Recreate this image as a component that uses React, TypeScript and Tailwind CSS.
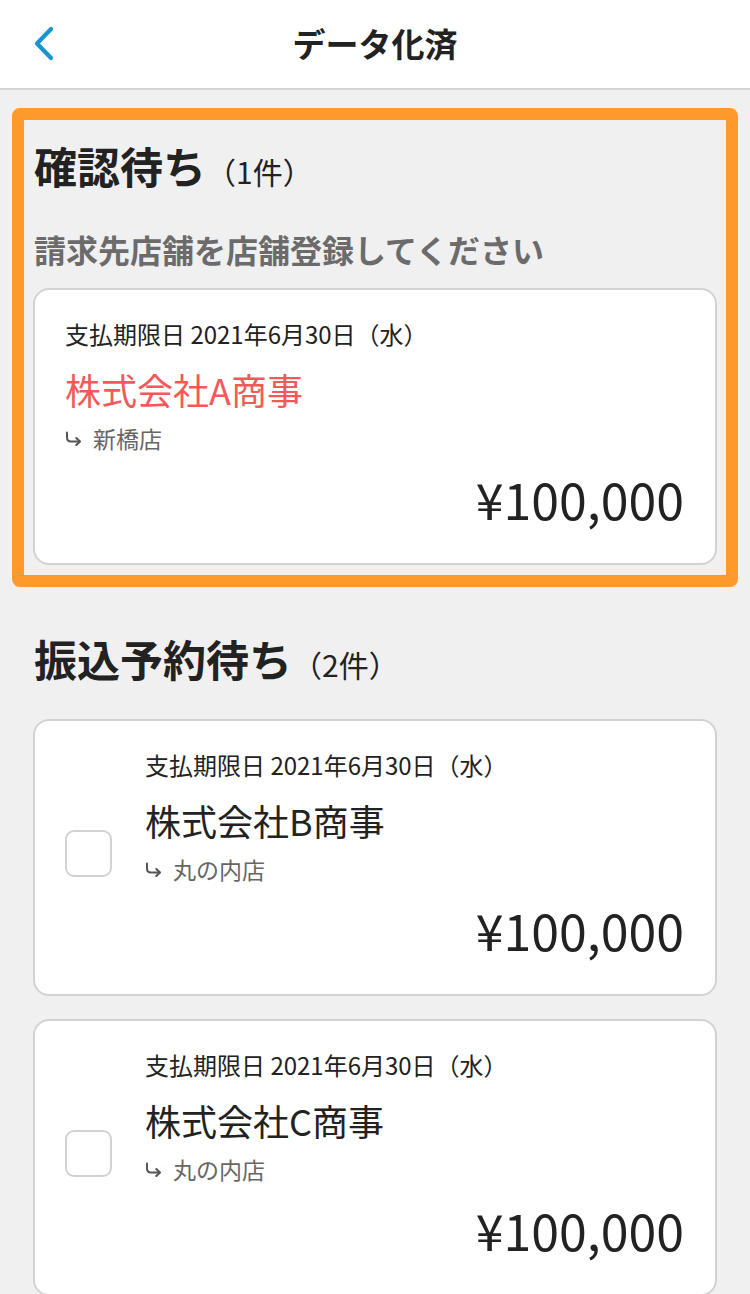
import React from "react";

const font = { fontFamily: '"Noto Sans CJK JP", "Noto Sans", sans-serif' };

function HookArrow() {
  return (
    <svg width="17" height="15" viewBox="0 0 17 15" className="shrink-0">
      <path d="M2 1.5 V6.5 Q2 10.5 6 10.5 H14.5" fill="none" stroke="#555" strokeWidth="2" strokeLinecap="round" />
      <path d="M11.3 7 L15 10.5 L11.3 14" fill="none" stroke="#555" strokeWidth="2" strokeLinecap="round" strokeLinejoin="round" />
    </svg>
  );
}

function CardBody({ name, branch, red }: { name: string; branch: string; red?: boolean }) {
  return (
    <div className="flex-1 min-w-0">
      <div className="text-[24px] leading-[32px] text-[#222]">支払期限日 2021年6月30日（水）</div>
      <div className={`mt-[17px] text-[36px] leading-[44px] ${red ? "text-[#f25a5a]" : "text-[#222]"}`}>{name}</div>
      <div className="mt-[12px] flex items-center gap-[11px] text-[23px] leading-[30px] text-[#666]">
        <HookArrow />
        <span>{branch}</span>
      </div>
      <div className="mt-[17px] text-right text-[50px] leading-[56px] text-[#222]">¥100,000</div>
    </div>
  );
}

function Card({ name, branch, red, checkbox }: { name: string; branch: string; red?: boolean; checkbox?: boolean }) {
  return (
    <div className="bg-white border-2 border-[#d2d2d2] rounded-[16px] pt-[28px] pb-[37px] pl-[30px] pr-[31px] flex items-center">
      {checkbox && (
        <div className="w-[47px] h-[47px] rounded-[9px] border-2 border-[#d2d2d2] bg-white shrink-0 mr-[33px]" />
      )}
      <CardBody name={name} branch={branch} red={red} />
    </div>
  );
}

export default function App() {
  return (
    <div className="min-h-screen bg-[#f0f0f0]" style={font}>
      <div className="h-[90px] bg-white border-b-2 border-[#d4d4d4] relative flex items-center justify-center">
        <svg className="absolute left-[32px] top-[26px]" width="24" height="36" viewBox="0 0 24 36">
          <path d="M19 3 L5 17.5 L19 32" fill="none" stroke="#1a93cf" strokeWidth="4.2" strokeLinecap="round" strokeLinejoin="round" />
        </svg>
        <div className="text-[33px] font-bold text-[#222] leading-[40px] -mt-[2px]">データ化済</div>
      </div>

      <div className="mx-[12px] mt-[18px] border-[12px] border-[#fd9a2b] rounded-[8px] px-[9px] pt-[17px] pb-[10px]">
        <div className="flex items-baseline pl-[1px]">
          <span className="text-[43px] leading-[56px] font-bold text-[#222]">確認待ち</span>
          <span className="text-[30px] text-[#222]">（1件）</span>
        </div>
        <div className="mt-[35px] pl-[1px] text-[32px] leading-[40px] font-bold text-[#6b6b6b]">請求先店舗を店舗登録してください</div>
        <div className="mt-[19px]">
          <Card name="株式会社A商事" branch="新橋店" red />
        </div>
      </div>

      <div className="px-[33px]">
        <div className="mt-[43px] flex items-baseline pl-[1px]">
          <span className="text-[43px] leading-[56px] font-bold text-[#222]">振込予約待ち</span>
          <span className="text-[30px] text-[#222]">（2件）</span>
        </div>
        <div className="mt-[32px] flex flex-col gap-[23px] pb-[40px]">
          <Card name="株式会社B商事" branch="丸の内店" checkbox />
          <Card name="株式会社C商事" branch="丸の内店" checkbox />
        </div>
      </div>
    </div>
  );
}
